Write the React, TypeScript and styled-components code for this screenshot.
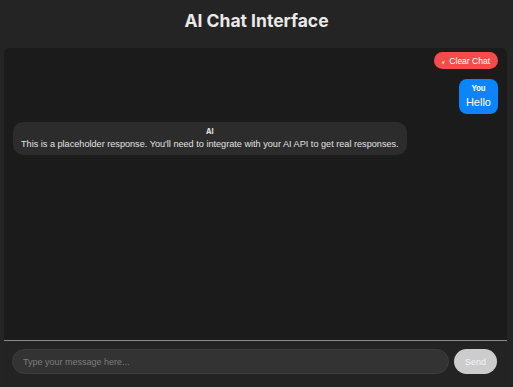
import React, { useState } from "react";
import styled, { createGlobalStyle } from "styled-components";

const GlobalStyle = createGlobalStyle`
  html, body {
    margin: 0;
    padding: 0;
    background: #242424;
    overflow: hidden;
  }
  body {
    font-family: Inter, "Liberation Sans", sans-serif;
    color: #ececec;
  }
`;

const Page = styled.div`
  display: flex;
  flex-direction: column;
  height: 387px;
`;

const Title = styled.h1`
  margin: 0;
  padding: 10px 0 0;
  height: 48px;
  box-sizing: border-box;
  text-align: center;
  font-size: 17.5px;
  font-weight: 700;
  color: #e9e9e9;
`;

const ChatBox = styled.div`
  flex: 1;
  margin: 0 6px 0 4px;
  display: flex;
  flex-direction: column;
  background: #1b1b1b;
  border-radius: 6px 6px 0 0;
  overflow: hidden;
`;

const Messages = styled.div`
  flex: 1;
  display: flex;
  flex-direction: column;
  padding: 4px 9px 8px 9px;
  gap: 8px;
  border-bottom: 1px solid #8a8a8a;
`;

const Toolbar = styled.div`
  display: flex;
  justify-content: flex-end;
  margin-bottom: 2px;
`;

const ClearButton = styled.button`
  height: 17px;
  padding: 0 8px 0 7px;
  border: none;
  border-radius: 9px;
  background: #f54b4e;
  color: #fff;
  font-family: "Liberation Sans", Arial, sans-serif;
  font-size: 8.5px;
  cursor: pointer;
  display: flex;
  align-items: center;
  gap: 1px;
`;

const Broom = styled.span`
  font-size: 6px;
`;

const Row = styled.div<{ $mine?: boolean }>`
  display: flex;
  justify-content: ${(p) => (p.$mine ? "flex-end" : "flex-start")};
`;

const Bubble = styled.div<{ $mine?: boolean }>`
  background: ${(p) => (p.$mine ? "#0a84ff" : "#2c2c2c")};
  color: ${(p) => (p.$mine ? "#fff" : "#e2e2e2")};
  border-radius: ${(p) => (p.$mine ? "8px" : "10px")};
  padding: ${(p) => (p.$mine ? "5px 7px 5px" : "5px 8px 4px")};
  text-align: center;
  max-width: 85%;
`;

const Sender = styled.div`
  font-size: 7.5px;
  font-weight: 700;
  margin-bottom: 2px;
`;

const Body = styled.div<{ $mine?: boolean }>`
  font-family: "Liberation Sans", Arial, sans-serif;
  font-size: ${(p) => (p.$mine ? "11px" : "9.15px")};
  line-height: ${(p) => (p.$mine ? "1.3" : "1.4")};
  white-space: ${(p) => (p.$mine ? "normal" : "nowrap")};
`;

const InputBar = styled.div`
  display: flex;
  align-items: center;
  gap: 5px;
  padding: 8px 10px 13px 8px;
  background: #232323;
`;

const Input = styled.input`
  flex: 1;
  height: 25px;
  box-sizing: border-box;
  border-radius: 13px;
  border: 1px solid #3c3c3c;
  background: #333333;
  color: #eee;
  padding: 0 10px;
  font-family: "Liberation Sans", Arial, sans-serif;
  font-size: 9px;
  outline: none;
  &::placeholder {
    color: #7d7d7d;
  }
`;

const SendButton = styled.button`
  width: 43px;
  height: 25px;
  border: none;
  border-radius: 13px;
  background: #cccccc;
  color: #f4f4f4;
  font-family: "Liberation Sans", Arial, sans-serif;
  font-size: 9px;
`;

type Message = { sender: string; text: string; mine?: boolean };

const initial: Message[] = [
  { sender: "You", text: "Hello", mine: true },
  {
    sender: "AI",
    text: "This is a placeholder response. You'll need to integrate with your AI API to get real responses.",
  },
];

export default function App() {
  const [messages, setMessages] = useState<Message[]>(initial);
  const [draft, setDraft] = useState("");

  return (
    <Page>
      <GlobalStyle />
      <Title>AI Chat Interface</Title>
      <ChatBox>
        <Messages>
          <Toolbar>
            <ClearButton onClick={() => setMessages([])}>
              <Broom>🧹</Broom>Clear Chat
            </ClearButton>
          </Toolbar>
          {messages.map((m, i) => (
            <Row key={i} $mine={m.mine}>
              <Bubble $mine={m.mine}>
                <Sender>{m.sender}</Sender>
                <Body $mine={m.mine}>{m.text}</Body>
              </Bubble>
            </Row>
          ))}
        </Messages>
        <InputBar>
          <Input
            placeholder="Type your message here..."
            value={draft}
            onChange={(e) => setDraft(e.target.value)}
          />
          <SendButton disabled={!draft}>Send</SendButton>
        </InputBar>
      </ChatBox>
    </Page>
  );
}
